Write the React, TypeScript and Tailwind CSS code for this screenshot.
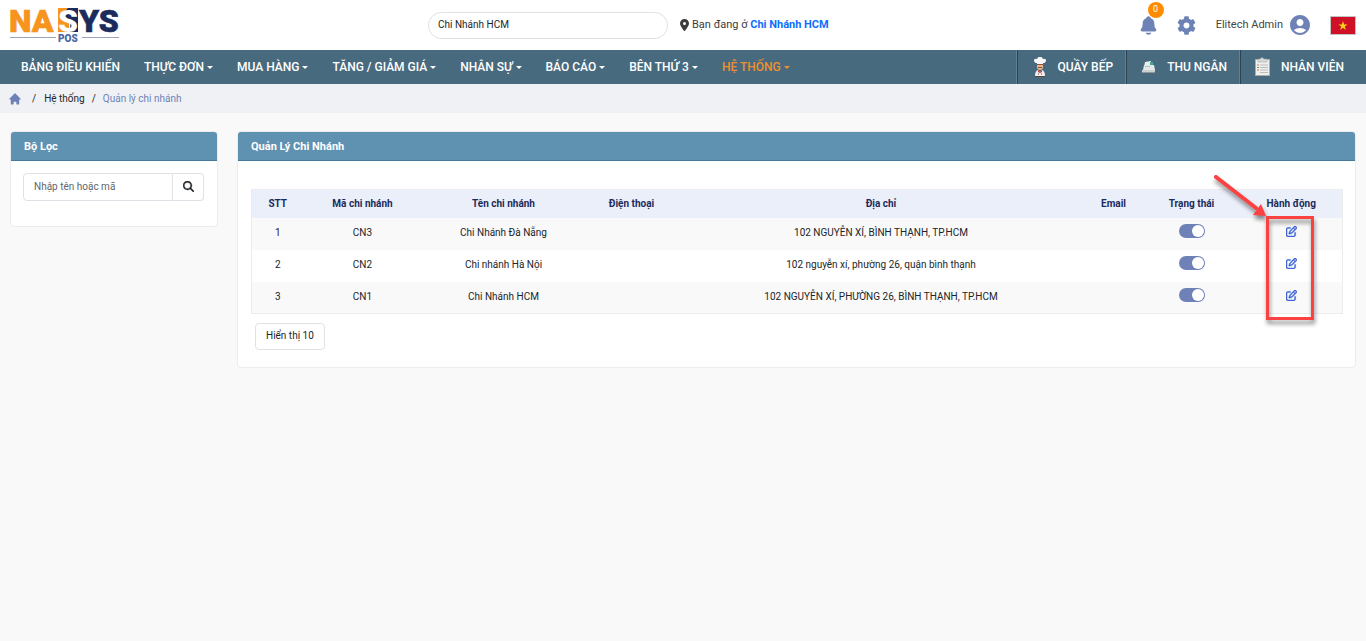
import { FaCog } from "react-icons/fa";
import { FaLocationDot, FaMagnifyingGlass, FaRegPenToSquare } from "react-icons/fa6";
import { HiHome } from "react-icons/hi";
import { IoNotifications } from "react-icons/io5";
import { MdAccountCircle } from "react-icons/md";
import type { ReactNode } from "react";

const menu = [
  { label: "BẢNG ĐIỀU KHIỂN", caret: false },
  { label: "THỰC ĐƠN", caret: true },
  { label: "MUA HÀNG", caret: true },
  { label: "TĂNG / GIẢM GIÁ", caret: true },
  { label: "NHÂN SỰ", caret: true },
  { label: "BÁO CÁO", caret: true },
  { label: "BÊN THỨ 3", caret: true },
  { label: "HỆ THỐNG", caret: true, active: true },
];

const branches = [
  { code: "CN3", name: "Chi Nhánh Đà Nẵng", address: "102 NGUYỄN XÍ, BÌNH THẠNH, TP.HCM" },
  { code: "CN2", name: "Chi nhánh Hà Nội", address: "102 nguyễn xí, phường 26, quận bình thạnh" },
  { code: "CN1", name: "Chi Nhánh HCM", address: "102 NGUYỄN XÍ, PHƯỜNG 26, BÌNH THẠNH, TP.HCM" },
];

// the address column takes whatever is left
const columns = [
  { label: "STT", width: "w-[52px]" },
  { label: "Mã chi nhánh", width: "w-[118px]" },
  { label: "Tên chi nhánh", width: "w-[164px]" },
  { label: "Điện thoại", width: "w-[92px]" },
  { label: "Địa chỉ", width: "w-auto" },
  { label: "Email", width: "w-[58px]" },
  { label: "Trạng thái", width: "w-[98px]" },
  { label: "Hành động", width: "w-[102px]" },
];

function Logo() {
  return (
    <svg viewBox="0 0 124 50" className="h-[50px] w-[124px]" role="img" aria-label="NASYS POS">
      <path d="M58 8h11v24H58z" fill="#f7941d" />
      <path d="M68 8h10v24H66q6-4 4-9l-4-6q-2-6 2-9z" fill="#1b2b5c" />
      <g fontFamily="Roboto, sans-serif" fontWeight="900" fontSize="32" strokeWidth=".6">
        <text x="9" y="32" fill="#f7941d" stroke="#f7941d">NA</text>
        <text x="58" y="32" fill="#fff">S</text>
        <text x="79" y="32" fill="#1b2b5c" stroke="#1b2b5c">YS</text>
      </g>
      <path d="M10 37.500h46M82 37.500h37" stroke="#9aa3bb" />
      <text x="58" y="42" fill="#4a66a0" fontFamily="Roboto, sans-serif" fontWeight="900" fontSize="10">POS</text>
    </svg>
  );
}

function ChefIcon() {
  return (
    <svg viewBox="0 0 16 20" className="h-5 w-4" aria-hidden="true">
      <path d="M5 6C1 6 1 1 5 2c1-3 5-3 6 0 4-1 4 4 0 4v2H5z" fill="#f6f6f6" />
      <path d="M5 7h6v3q0 3-3 3t-3-3z" fill="#e8b48a" />
      <path d="M5 7.500h6M6 10.500h4" stroke="#8a553a" />
      <path d="M3 19q0-5 3-6l2 2 2-2q3 1 3 6z" fill="#f1f1f1" />
      <path d="M6 13l2 2 2-2v2l-2 1-2-1z" fill="#c9302c" />
      <path d="M6 17h1M9 17h1M3 19.500h10" stroke="#5a4640" />
    </svg>
  );
}

function RegisterIcon() {
  return (
    <svg viewBox="0 0 16 16" className="size-4" aria-hidden="true">
      <path d="M4 3l6-1v6H3z" fill="#e9eded" />
      <path d="M9 3h3v3H9z" fill="#3fa796" />
      <path d="M3 6h10l1 5H2z" fill="#e4e8e9" />
      <path d="M4 7.500h5" stroke="#b5bec1" />
      <path d="M1 11h13v3H1z" fill="#cbd1d3" />
      <path d="M1 13.500h13" stroke="#8f999d" />
    </svg>
  );
}

function ClipboardIcon() {
  return (
    <svg viewBox="0 0 16 20" className="h-5 w-4" aria-hidden="true">
      <path d="M0 2h15v17H0z" fill="#a9adab" />
      <path d="M1 3h13v15H1z" fill="#efefec" />
      <path d="M3 2h2q2-3 4 0h3v3H3z" fill="#d5d8d8" stroke="#9da2a2" strokeWidth=".5" />
      <path d="M5 8h8M5 10.500h8M5 13h8M5 15.500h8" stroke="#b9bcbc" />
      <path d="M2 8h2M2 13h2" stroke="#d86a5c" />
      <path d="M2 10.500h2" stroke="#5c9a70" />
    </svg>
  );
}

const stations = [
  { label: "QUẦY BẾP", icon: <ChefIcon /> },
  { label: "THU NGÂN", icon: <RegisterIcon /> },
  { label: "NHÂN VIÊN", icon: <ClipboardIcon /> },
];

function Caret() {
  return <span className="ml-[3px] border-x-[3px] border-t-[3px] border-x-transparent border-t-current" />;
}

function Card({ title, className, children }: { title: string; className?: string; children: ReactNode }) {
  return (
    <section className={`rounded border border-[#ececee] bg-white ${className ?? ""}`}>
      <h2 className="rounded-t-[3px] border-b border-[#477a97] bg-[#5f91b1] px-[13px] pt-[6px] pb-1 text-[11px] leading-[18px] font-bold text-white">
        {title}
      </h2>
      {children}
    </section>
  );
}

function Header() {
  return (
    <header className="grid h-[50px] grid-cols-[428px_1fr_auto] items-center bg-white pr-[10px]">
      <a href="#">
        <Logo />
      </a>
      <div className="flex items-center gap-3">
        <input
          type="text"
          aria-label="Chi nhánh"
          defaultValue="Chi Nhánh HCM"
          className="h-[27px] w-60 rounded-full border border-[#dee2e6] px-[9px] pb-[2px] text-[10px] text-[#212529] outline-none"
        />
        <p className="flex items-center gap-[3px] text-[11px] text-[#3c3c3c]">
          <FaLocationDot className="h-3 w-[9px]" />
          <span>
            Bạn đang ở <a href="#" className="font-bold text-[#0d6efd]">Chi Nhánh HCM</a>
          </span>
        </p>
      </div>
      <div className="flex items-center text-[#6e82b7]">
        <button type="button" aria-label="Thông báo" className="relative mr-[18px]">
          <IoNotifications className="size-[21px]" />
          <span className="absolute -top-[13px] left-[10px] flex size-4 items-center justify-center rounded-full bg-[#ff8c00] text-[9px] text-white">
            0
          </span>
        </button>
        <button type="button" aria-label="Cài đặt" className="mr-5">
          <FaCog className="size-[19px]" />
        </button>
        <button type="button" className="mr-[18px] flex items-center gap-[5px] text-[11px] text-[#444]">
          Elitech Admin
          <MdAccountCircle className="size-6 text-[#6e82b7]" />
        </button>
        <button type="button" aria-label="Tiếng Việt">
          <svg viewBox="0 0 26 19" className="h-[19px] w-[26px]">
            <path d="M.5.5h25v18H.5z" fill="#ce1126" stroke="#c3c3c3" />
            <path d="M13 5l1.100 3.400h3.500l-2.800 2.100 1 3.400-2.800-2.100-2.800 2.100 1-3.400-2.800-2.100h3.500z" fill="#fcd116" />
          </svg>
        </button>
      </div>
    </header>
  );
}

function Navbar() {
  return (
    <nav className="flex h-[34px] justify-between bg-[#486a7e] text-[12px] font-medium text-white">
      <ul className="flex items-center gap-6 pl-[21px]">
        {menu.map((m) => (
          <li key={m.label}>
            <a href="#" className={`flex items-center ${m.active ? "text-[#ee8f2f]" : ""}`}>
              {m.label}
              {m.caret && <Caret />}
            </a>
          </li>
        ))}
      </ul>
      <ul className="flex pr-[10px]">
        {stations.map((s) => (
          <li key={s.label} className="border-l border-[#5c8199]">
            <a href="#" className="flex h-full items-center gap-[10px] border-l border-[#2c4351] pr-3 pl-[14px]">
              {s.icon}
              {s.label}
            </a>
          </li>
        ))}
      </ul>
    </nav>
  );
}

// Red callout around the edit buttons, with an arrow pointing at it
function Callout() {
  return (
    <svg
      viewBox="0 0 112 162"
      className="pointer-events-none absolute -top-[19px] right-[21px] h-[162px] w-28 drop-shadow-[1px_4px_2px_rgba(0,0,0,0.45)]"
      aria-hidden="true"
    >
      <path d="M57.500 47.500h45v101h-45z" fill="none" stroke="#fb4141" strokeWidth="3" />
      <path d="M6 7l40 31" stroke="#fb4141" strokeWidth="4" strokeLinecap="round" />
      <path d="M56 46l-13-1 8-11z" fill="#fb4141" />
    </svg>
  );
}

function BranchTable() {
  return (
    <table className="w-full table-fixed border border-[#ececee] text-center text-[10px] text-[#212529]">
      <thead>
        <tr className="h-7 bg-[#ebeff9] text-[#1b2b5c]">
          {columns.map((c) => (
            <th key={c.label} className={`font-bold ${c.width}`}>
              {c.label}
            </th>
          ))}
        </tr>
      </thead>
      <tbody>
        {branches.map((b, i) => (
          <tr key={b.code} className="h-8 odd:bg-[#f9f9f9] [&>td]:pb-[2px]">
            <td>{i + 1}</td>
            <td>{b.code}</td>
            <td>{b.name}</td>
            <td />
            <td>{b.address}</td>
            <td />
            <td className="align-top">
              <label className="mt-[6px] inline-flex h-[14px] w-[26px] items-center justify-end rounded-full bg-[#6e82b7] p-px align-top">
                <input type="checkbox" defaultChecked aria-label={`Trạng thái ${b.name}`} className="sr-only" />
                <span className="size-3 rounded-full bg-white" />
              </label>
            </td>
            <td className="align-top">
              <button type="button" aria-label={`Sửa ${b.name}`} className="mt-2 align-top text-[#3d63d8]">
                <FaRegPenToSquare className="size-[11px] stroke-current" strokeWidth={20} />
              </button>
            </td>
          </tr>
        ))}
      </tbody>
    </table>
  );
}

export default function App() {
  return (
    <div className="min-h-screen bg-[#f9f9f9] font-['Roboto',sans-serif]">
      <Header />
      <Navbar />
      <nav className="flex h-[29px] items-center bg-[#f0f1f5] px-2 text-[10px] text-[#212529]">
        <a href="#" aria-label="Trang chủ" className="mr-[2px]">
          <HiHome className="size-[14px] text-[#6e82b7]" />
        </a>
        <span className="mx-2">/</span>
        <a href="#">Hệ thống</a>
        <span className="mx-[7px]">/</span>
        <span className="text-[#6e82b7]">Quản lý chi nhánh</span>
      </nav>
      <main className="flex items-start gap-[19px] px-[10px] pt-[18px]">
        <Card title="Bộ Lọc" className="w-52 shrink-0">
          <form className="flex px-3 pt-3 pb-[25px]">
            <input
              type="text"
              aria-label="Nhập tên hoặc mã"
              placeholder="Nhập tên hoặc mã"
              className="h-7 w-[150px] rounded-l border border-[#dee2e6] px-[10px] pb-px text-[10px] outline-none placeholder:text-[#5f666d]"
            />
            <button
              type="button"
              aria-label="Tìm kiếm"
              className="flex h-7 w-[31px] items-center justify-center rounded-r border border-l-0 border-[#dee2e6] pb-[2px] text-[#212529]"
            >
              <FaMagnifyingGlass className="size-[11px] stroke-current" strokeWidth={16} />
            </button>
          </form>
        </Card>
        <Card title="Quản Lý Chi Nhánh" className="min-w-0 flex-1">
          <div className="pt-7 pr-3 pb-[17px] pl-[13px]">
            <div className="relative">
              <BranchTable />
              <Callout />
            </div>
            <button
              type="button"
              className="mt-[9px] ml-1 h-[27px] rounded border border-[#dee2e6] px-[10px] pb-[2px] text-[10px] text-[#212529]"
            >
              Hiển thị 10
            </button>
          </div>
        </Card>
      </main>
    </div>
  );
}
